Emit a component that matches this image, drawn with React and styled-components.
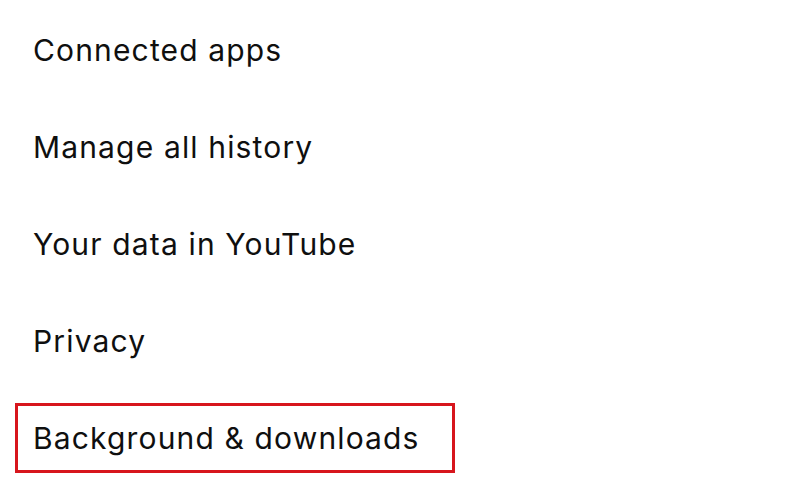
import React from 'react';
import styled, { createGlobalStyle } from 'styled-components';

const GlobalStyle = createGlobalStyle`
  html, body {
    margin: 0;
    padding: 0;
    background: #ffffff;
  }
  body {
    font-family: Inter, "Noto Sans", "Liberation Sans", sans-serif;
    -webkit-font-smoothing: antialiased;
  }
`;

const items = [
  { label: 'Connected apps' },
  { label: 'Manage all history' },
  { label: 'Your data in YouTube' },
  { label: 'Privacy' },
  { label: 'Background & downloads', highlighted: true },
];

export default function App() {
  return (
    <>
      <GlobalStyle />
      <List>
        {items.map((item) => (
          <Row key={item.label}>
            <Label $highlighted={item.highlighted}>{item.label}</Label>
          </Row>
        ))}
      </List>
    </>
  );
}

const List = styled.div`
  width: 808px;
  height: 491px;
  padding-top: 1px;
  box-sizing: border-box;
  display: flex;
  flex-direction: column;
  overflow: hidden;
`;

const Row = styled.div`
  height: 97px;
  display: flex;
  align-items: center;
  flex-shrink: 0;
`;

const Label = styled.div`
  margin-left: 15px;
  width: 440px;
  height: 70px;
  box-sizing: border-box;
  padding-left: 15px;
  display: flex;
  align-items: center;
  border: 3px solid ${(p) => (p.$highlighted ? '#d7161d' : 'transparent')};
  font-size: 30px;
  font-weight: 400;
  color: #0f0f0f;
  letter-spacing: 1.15px;
  white-space: nowrap;
`;
